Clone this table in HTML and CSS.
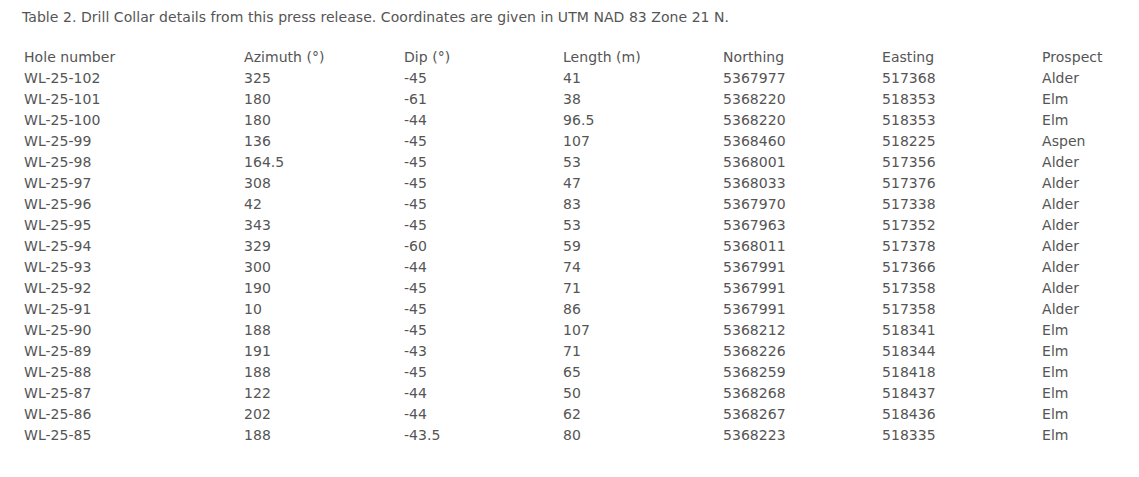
FILE: index.html
```html
<!DOCTYPE html>
<html>
<head>
<meta charset="utf-8">
<link rel="stylesheet" href="styles.css">
</head>
<body>
<div class="page">
<p class="caption">Table 2. Drill Collar details from this press release. Coordinates are given in UTM NAD 83 Zone 21 N.</p>
<table class="collars">
<colgroup>
<col class="w-hole"><col class="w-a"><col class="w-b"><col class="w-a"><col class="w-b"><col class="w-a"><col class="w-last">
</colgroup>
<thead>
<tr><th>Hole number</th><th>Azimuth (°)</th><th>Dip (°)</th><th>Length (m)</th><th>Northing</th><th>Easting</th><th>Prospect</th></tr>
</thead>
<tbody>
<tr><td>WL-25-102</td><td>325</td><td>-45</td><td>41</td><td>5367977</td><td>517368</td><td>Alder</td></tr>
<tr><td>WL-25-101</td><td>180</td><td>-61</td><td>38</td><td>5368220</td><td>518353</td><td>Elm</td></tr>
<tr><td>WL-25-100</td><td>180</td><td>-44</td><td>96.5</td><td>5368220</td><td>518353</td><td>Elm</td></tr>
<tr><td>WL-25-99</td><td>136</td><td>-45</td><td>107</td><td>5368460</td><td>518225</td><td>Aspen</td></tr>
<tr><td>WL-25-98</td><td>164.5</td><td>-45</td><td>53</td><td>5368001</td><td>517356</td><td>Alder</td></tr>
<tr><td>WL-25-97</td><td>308</td><td>-45</td><td>47</td><td>5368033</td><td>517376</td><td>Alder</td></tr>
<tr><td>WL-25-96</td><td>42</td><td>-45</td><td>83</td><td>5367970</td><td>517338</td><td>Alder</td></tr>
<tr><td>WL-25-95</td><td>343</td><td>-45</td><td>53</td><td>5367963</td><td>517352</td><td>Alder</td></tr>
<tr><td>WL-25-94</td><td>329</td><td>-60</td><td>59</td><td>5368011</td><td>517378</td><td>Alder</td></tr>
<tr><td>WL-25-93</td><td>300</td><td>-44</td><td>74</td><td>5367991</td><td>517366</td><td>Alder</td></tr>
<tr><td>WL-25-92</td><td>190</td><td>-45</td><td>71</td><td>5367991</td><td>517358</td><td>Alder</td></tr>
<tr><td>WL-25-91</td><td>10</td><td>-45</td><td>86</td><td>5367991</td><td>517358</td><td>Alder</td></tr>
<tr><td>WL-25-90</td><td>188</td><td>-45</td><td>107</td><td>5368212</td><td>518341</td><td>Elm</td></tr>
<tr><td>WL-25-89</td><td>191</td><td>-43</td><td>71</td><td>5368226</td><td>518344</td><td>Elm</td></tr>
<tr><td>WL-25-88</td><td>188</td><td>-45</td><td>65</td><td>5368259</td><td>518418</td><td>Elm</td></tr>
<tr><td>WL-25-87</td><td>122</td><td>-44</td><td>50</td><td>5368268</td><td>518437</td><td>Elm</td></tr>
<tr><td>WL-25-86</td><td>202</td><td>-44</td><td>62</td><td>5368267</td><td>518436</td><td>Elm</td></tr>
<tr><td>WL-25-85</td><td>188</td><td>-43.5</td><td>80</td><td>5368223</td><td>518335</td><td>Elm</td></tr>
</tbody>
</table>
</div>
</body>
</html>
```
FILE: styles.css
```css
html, body {
  margin: 0;
  padding: 0;
  background: #fff;
}
.page {
  padding: 7px 0 0 22px;
  font-family: "DejaVu Sans", Verdana, sans-serif;
  font-size: 14px;
  letter-spacing: 0.05px;
  color: #555;
}
.caption {
  margin: 0 0 19px 0;
  line-height: 21px;
}
.collars {
  border-collapse: collapse;
  table-layout: fixed;
  width: 1095px;
}
.w-hole { width: 220px; }
.w-a { width: 160px; }
.w-b { width: 159px; }
.w-last { width: 77px; }
.collars th, .collars td {
  padding: 0 0 0 2px;
  height: 21px;
  line-height: 21px;
  text-align: left;
  font-weight: normal;
  white-space: nowrap;
}
```
